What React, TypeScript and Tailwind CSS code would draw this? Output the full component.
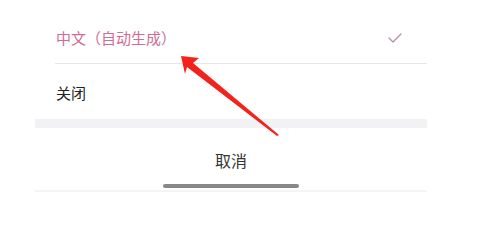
export default function App() {
  return (
    <div className="relative w-[480px] h-[202px] bg-white overflow-hidden font-['Noto_Sans_CJK_SC','Noto_Sans',sans-serif]">
      <div className="ml-[35px] w-[392px] flex flex-col">
        {/* selected language */}
        <div className="h-[63px] pt-[13px] pl-[21px] pr-[25px] flex items-center justify-between">
          <span className="text-[15px] text-[#d06c97] tracking-[0px]">中文（自动生成）</span>
          <svg width="14" height="10" viewBox="0 0 14 10" fill="none">
            <path d="M1 5l4 4 8-8" stroke="#b88aa5" strokeWidth="1.2" strokeLinecap="round" strokeLinejoin="round" />
          </svg>
        </div>
        <div className="ml-[20px] h-px bg-[#e6e6e8]" />

        {/* off */}
        <div className="h-[55px] pt-[3px] pl-[21px] flex items-center">
          <span className="text-[15px] text-[#222]">关闭</span>
        </div>

        <div className="h-[9px] bg-[#f2f2f4]" />

        {/* cancel */}
        <div className="h-[56px] pt-[8px] flex items-center justify-center">
          <span className="text-[16px] text-[#333]">取消</span>
        </div>
        <div className="flex justify-center">
          <div className="w-[136px] h-[4px] rounded-full bg-[#888]" />
        </div>
        <div className="mt-[2px] h-[2px] bg-[#f4f4f5]" />
      </div>

      {/* annotation arrow */}
      <svg className="absolute left-0 top-0" width="480" height="202" viewBox="0 0 480 202">
        <polygon points="181,56 199,58 193,63 279,135 277,136 187,67 185,74" fill="#f3231b" />
      </svg>
    </div>
  );
}
